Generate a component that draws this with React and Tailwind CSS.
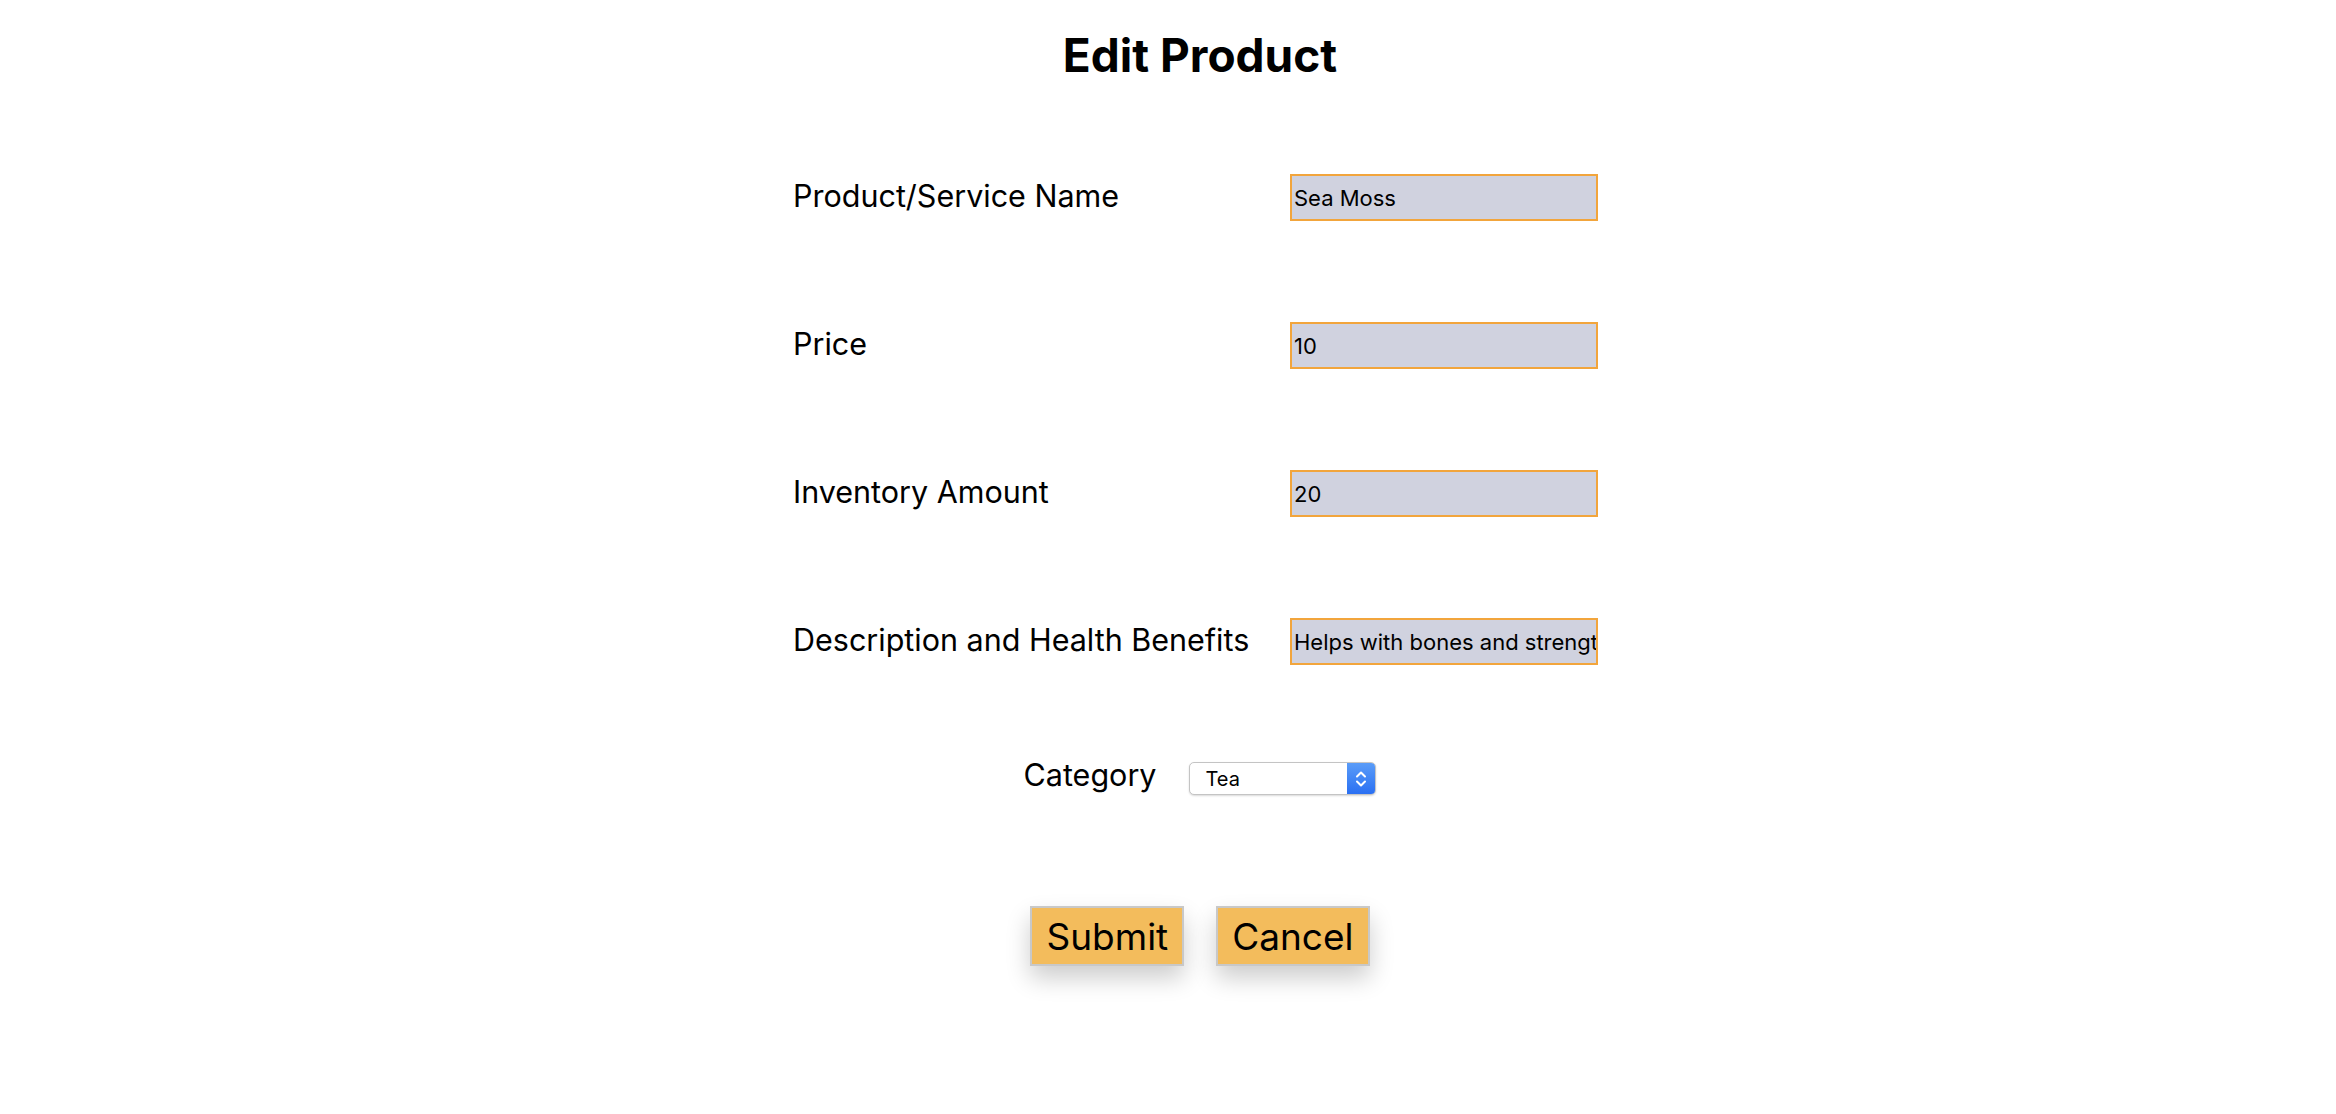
import React from "react";

function Row({ label, value }) {
  return (
    <div className="grid grid-cols-[497px_308px] items-center h-[47px]">
      <div className="text-[30.5px] leading-none text-black pb-[3px] whitespace-nowrap font-['Inter',sans-serif]">
        {label}
      </div>
      <input
        readOnly
        defaultValue={value}
        className="w-[308px] h-[47px] border-2 border-[#f2a53c] bg-[#d0d2df] pl-[2px] text-[22px] text-black outline-none font-['Inter',sans-serif]"
      />
    </div>
  );
}

export default function App() {
  return (
    <div className="min-h-[1114px] bg-white pl-[64px] font-['Inter',sans-serif]">
      <div className="flex flex-col items-center">
        <h1 className="mt-[32px] text-[46px] leading-none font-bold text-black">Edit Product</h1>

        <div className="mt-[96px] pr-[9px] flex flex-col gap-[101px]">
          <Row label="Product/Service Name" value="Sea Moss" />
          <Row label="Price" value="10" />
          <Row label="Inventory Amount" value="20" />
          <Row label="Description and Health Benefits" value="Helps with bones and strength" />
        </div>

        <div className="mt-[97px] flex items-center gap-[33px] h-[33px]">
          <div className="text-[30.5px] leading-none text-black pb-[7px]">Category</div>
          <div className="relative w-[187px] h-[33px] rounded-[5px] border border-[#c4c4c4] bg-white shadow-[0_1px_2px_rgba(0,0,0,0.15)] flex items-center overflow-hidden">
            <span className="pl-[15px] text-[20px] leading-none text-black">Tea</span>
            <div className="absolute right-0 top-0 bottom-0 w-[28px] bg-gradient-to-b from-[#5a9cf8] to-[#2a6ff2] flex items-center justify-center">
              <svg width="14" height="22" viewBox="0 0 14 22" fill="none" stroke="white" strokeWidth="2" strokeLinecap="round" strokeLinejoin="round">
                <path d="M3 8.5 L7 4.5 L11 8.5" />
                <path d="M3 13.5 L7 17.5 L11 13.5" />
              </svg>
            </div>
          </div>
        </div>

        <div className="mt-[111px] flex gap-[32px]">
          <button className="h-[60px] px-[14px] border-2 border-[#c8c8c8] bg-[#f3bc5c] text-[37px] leading-none text-black shadow-[0_12px_24px_rgba(0,0,0,0.2)]">
            Submit
          </button>
          <button className="h-[60px] px-[14px] border-2 border-[#c8c8c8] bg-[#f3bc5c] text-[37px] leading-none text-black shadow-[0_12px_24px_rgba(0,0,0,0.2)]">
            Cancel
          </button>
        </div>
      </div>
    </div>
  );
}
